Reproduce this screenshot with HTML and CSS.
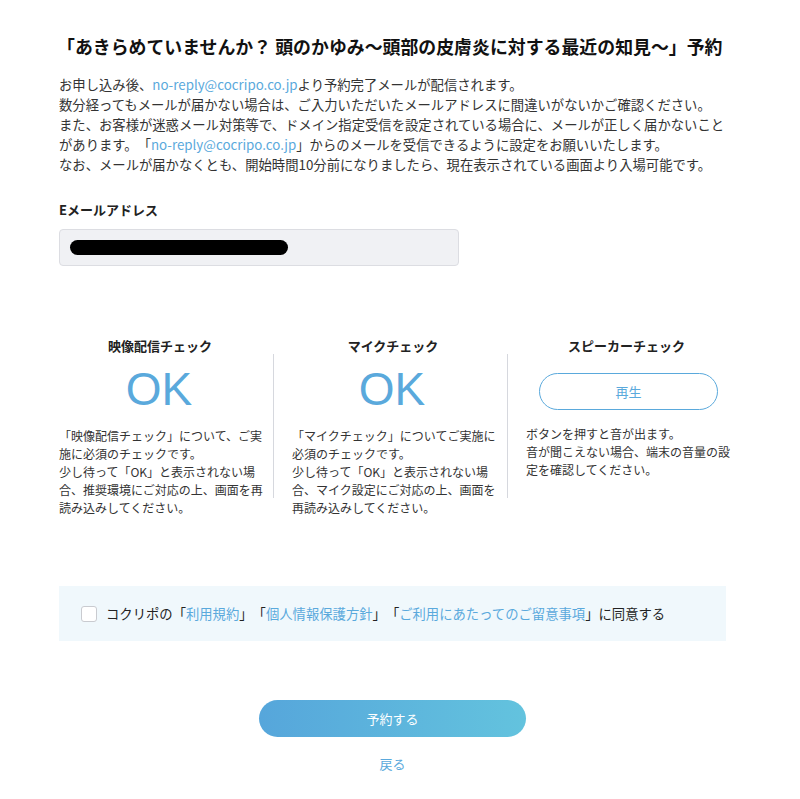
FILE: index.html
```
<!DOCTYPE html>
<html lang="ja">
<head>
<meta charset="utf-8">
<title>予約</title>
<link rel="stylesheet" href="styles.css">
</head>
<body>
<main class="page">
  <h1 class="title">「あきらめていませんか？ 頭のかゆみ〜頭部の皮膚炎に対する最近の知見〜」予約</h1>
  <p class="notice">お申し込み後、<a class="link" href="#">no-reply@cocripo.co.jp</a>より予約完了メールが配信されます。<br>数分経ってもメールが届かない場合は、ご入力いただいたメールアドレスに間違いがないかご確認ください。<br>また、お客様が迷惑メール対策等で、ドメイン指定受信を設定されている場合に、メールが正しく届かないことがあります。「<a class="link" href="#">no-reply@cocripo.co.jp</a>」からのメールを受信できるように設定をお願いいたします。<br>なお、メールが届かなくとも、開始時間10分前になりましたら、現在表示されている画面より入場可能です。</p>

  <div class="field-label">Eメールアドレス</div>
  <div class="input"><span class="redacted"></span></div>

  <section class="checks">
    <h2 class="check-title c1">映像配信チェック</h2>
    <h2 class="check-title c2">マイクチェック</h2>
    <h2 class="check-title c3">スピーカーチェック</h2>

    <div class="check-body c1">
      <div class="ok">OK</div>
      <p class="check-text">「映像配信チェック」について、ご実施に必須のチェックです。<br>少し待って「OK」と表示されない場合、推奨環境にご対応の上、画面を再読み込みしてください。</p>
    </div>
    <div class="divider"></div>
    <div class="check-body c2">
      <div class="ok">OK</div>
      <p class="check-text">「マイクチェック」についてご実施に必須のチェックです。<br>少し待って「OK」と表示されない場合、マイク設定にご対応の上、画面を再読み込みしてください。</p>
    </div>
    <div class="divider"></div>
    <div class="check-body c3">
      <button class="play" type="button">再生</button>
      <p class="check-text play-text">ボタンを押すと音が出ます。<br>音が聞こえない場合、端末の音量の設定を確認してください。</p>
    </div>
  </section>

  <label class="agree">
    <input class="checkbox" type="checkbox">
    <span>コクリポの「<a class="link" href="#">利用規約</a>」「<a class="link" href="#">個人情報保護方針</a>」「<a class="link" href="#">ご利用にあたってのご留意事項</a>」に同意する</span>
  </label>

  <div class="actions">
    <button class="submit" type="button">予約する</button>
    <a class="back" href="#">戻る</a>
  </div>
</main>
</body>
</html>
```
FILE: styles.css
```
* { box-sizing: border-box; }
html, body { margin: 0; padding: 0; background: #fff; }
body {
  font-family: "Noto Sans CJK JP", "Noto Sans", sans-serif;
  color: #333;
  text-spacing-trim: space-all;
}
.page {
  width: 667px;
  margin-left: 59px;
  padding-top: 34px;
  padding-bottom: 20px;
}
.title {
  margin: 0 0 0 -2px;
  font-size: 17.9px;
  line-height: 24px;
  font-weight: 700;
  color: #111;
  white-space: nowrap;
}
.notice {
  margin: 17px 0 0;
  font-size: 13.33px;
  line-height: 20px;
  color: #333;
}
.link { color: #5aa9dc; text-decoration: none; }
.field-label {
  margin-top: 25px;
  font-size: 13px;
  line-height: 20px;
  font-weight: 700;
  color: #222;
}
.input {
  margin-top: 9px;
  width: 400px;
  height: 37px;
  background: #f0f1f4;
  border: 1px solid #dcdde2;
  border-radius: 4px;
  display: flex;
  align-items: center;
  padding-left: 10px;
}
.redacted {
  display: block;
  width: 218px;
  height: 15px;
  background: #000;
  border-radius: 8px;
}
.checks {
  margin-top: 71px;
  width: 680px;
  display: grid;
  grid-template-columns: 214px 1px 233px 1px 231px;
  grid-template-rows: 17px auto;
}
.check-title {
  margin: 0;
  font-size: 13px;
  line-height: 17px;
  font-weight: 700;
  color: #222;
  text-align: center;
  grid-row: 1;
}
.check-title.c1 { grid-column: 1; padding-right: 12px; }
.check-title.c2 { grid-column: 3; padding-left: 14px; padding-right: 9px; }
.check-title.c3 { grid-column: 5; padding-left: 14px; padding-right: 8px; }
.check-body { grid-row: 2; display: flex; flex-direction: column; }
.check-body.c1 { grid-column: 1; padding-right: 8px; }
.check-body.c2 { grid-column: 3; padding-left: 18px; padding-right: 9px; }
.check-body.c3 { grid-column: 5; padding-left: 18px; padding-right: 8px; }
.divider {
  grid-row: 2;
  width: 1px;
  height: 144px;
  background: #d6d8de;
}
.ok {
  margin-top: 12px;
  font-family: "Liberation Sans", Arial, sans-serif;
  font-size: 46px;
  line-height: 46px;
  color: #5aa9dc;
  text-align: center;
  padding-right: 6px;
}
.check-text {
  margin: 15px 0 0;
  font-size: 12px;
  line-height: 18px;
  color: #333;
}
.play {
  margin: 19px auto 0;
  width: 179px;
  height: 37px;
  border: 1px solid #5aa9dc;
  border-radius: 19px;
  background: #fff;
  color: #5aa9dc;
  font-family: inherit;
  font-size: 13px;
  cursor: pointer;
}
.play-text { margin-top: 15px; }
.agree {
  margin-top: 69px;
  height: 55px;
  background: #f0f8fc;
  display: flex;
  align-items: center;
  gap: 9px;
  padding-left: 22px;
  font-size: 13.33px;
  color: #222;
}
.checkbox {
  appearance: none;
  -webkit-appearance: none;
  margin: 0;
  width: 16px;
  height: 16px;
  border: 1px solid #c9cbd0;
  border-radius: 3px;
  background: #fff;
}
.actions {
  display: flex;
  flex-direction: column;
  align-items: center;
  margin-top: 59px;
}
.submit {
  width: 267px;
  height: 37px;
  border: none;
  border-radius: 19px;
  background: linear-gradient(90deg, #56a6db 0%, #63c3de 100%);
  color: #fff;
  font-family: inherit;
  font-size: 13px;
  cursor: pointer;
}
.back {
  margin-top: 17px;
  font-size: 13px;
  line-height: 20px;
  color: #5aa9dc;
  text-decoration: none;
}
```
